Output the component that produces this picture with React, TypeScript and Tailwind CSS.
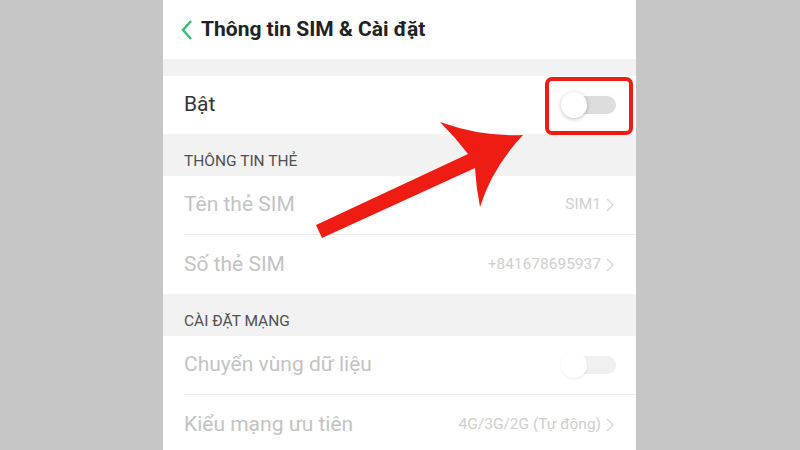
import React from "react";

const font = { fontFamily: "Roboto, 'Noto Sans', sans-serif" };

const Chevron = ({ className }: { className?: string }) => (
  <svg width="8" height="14" viewBox="0 0 8 14" className={className}>
    <path d="M1 1l6 6-6 6" fill="none" stroke="currentColor" strokeWidth="1.3" />
  </svg>
);

const Toggle = ({ faded }: { faded?: boolean }) => (
  <div className={`relative w-[54px] h-[18px] rounded-full ${faded ? "bg-[#f0f0f0]" : "bg-[#dddddd]"}`}>
    <div
      className={`absolute left-[-1px] top-[-4px] w-[26px] h-[26px] rounded-full bg-white ${
        faded ? "shadow-[0_1px_3px_rgba(0,0,0,0.08)]" : "shadow-[0_1px_4px_rgba(0,0,0,0.25)]"
      }`}
    />
  </div>
);

const Section = ({ title }: { title: string }) => (
  <div className="h-[42px] bg-[#f2f2f2] flex items-end pb-[3px] pl-[21px] text-[15.5px] text-[#505050]">
    {title}
  </div>
);

const Row = ({
  label,
  value,
  toggle,
  divider,
}: {
  label: string;
  value?: string;
  toggle?: boolean;
  divider?: boolean;
}) => (
  <div className="h-[59px] bg-white pl-[21px]">
    <div className={`h-full flex items-center pr-[20px] ${divider ? "border-b border-[#eeeeee]" : ""}`}>
      <span className="flex-1 text-[21px] text-[#c3c3c3]">{label}</span>
      {value && (
        <span className="flex items-center gap-[5px] text-[15.5px] text-[#cfcfcf] mr-[2px]">
          {value}
          <Chevron className="text-[#d6d6d6]" />
        </span>
      )}
      {toggle && <Toggle faded />}
    </div>
  </div>
);

export default function App() {
  return (
    <div className="relative w-[800px] h-[450px] overflow-hidden bg-[#c6c6c6] flex justify-center" style={font}>
      <div className="w-[473px] ml-[-1px] bg-white">
        {/* top bar */}
        <div className="h-[59px] flex items-center pl-[18px] gap-[8px]">
          <svg width="12" height="22" viewBox="0 0 12 22">
            <path d="M10 2L2 11l8 9" fill="none" stroke="#2fbf6e" strokeWidth="2.4" />
          </svg>
          <span className="text-[21px] font-bold text-[#222222]">Thông tin SIM &amp; Cài đặt</span>
        </div>
        <div className="h-[17px] bg-[#f2f2f2]" />
        <div className="h-[58px] flex items-center pl-[21px] pr-[20px]">
          <span className="flex-1 text-[21px] text-[#333333]">Bật</span>
          <Toggle />
        </div>
        <Section title="THÔNG TIN THẺ" />
        <Row label="Tên thẻ SIM" value="SIM1" divider />
        <Row label="Số thẻ SIM" value="+841678695937" />
        <Section title="CÀI ĐẶT MẠNG" />
        <Row label="Chuyển vùng dữ liệu" toggle divider />
        <Row label="Kiểu mạng ưu tiên" value="4G/3G/2G (Tự động)" />
      </div>

      {/* annotation: highlight box + arrow */}
      <div className="absolute left-[545px] top-[77px] w-[88px] h-[58px] rounded-[7px] border-[4px] border-[#ee1c12]" />
      <svg className="absolute left-0 top-0" width="800" height="450" viewBox="0 0 800 450">
        <path
          d="M316 225 L468 154 Q455 137 440 122 Q482 137 523 135 Q492 168 480 207 Q476 187 475 168 L322 238 Z"
          fill="#ee1c12"
        />
      </svg>
    </div>
  );
}
